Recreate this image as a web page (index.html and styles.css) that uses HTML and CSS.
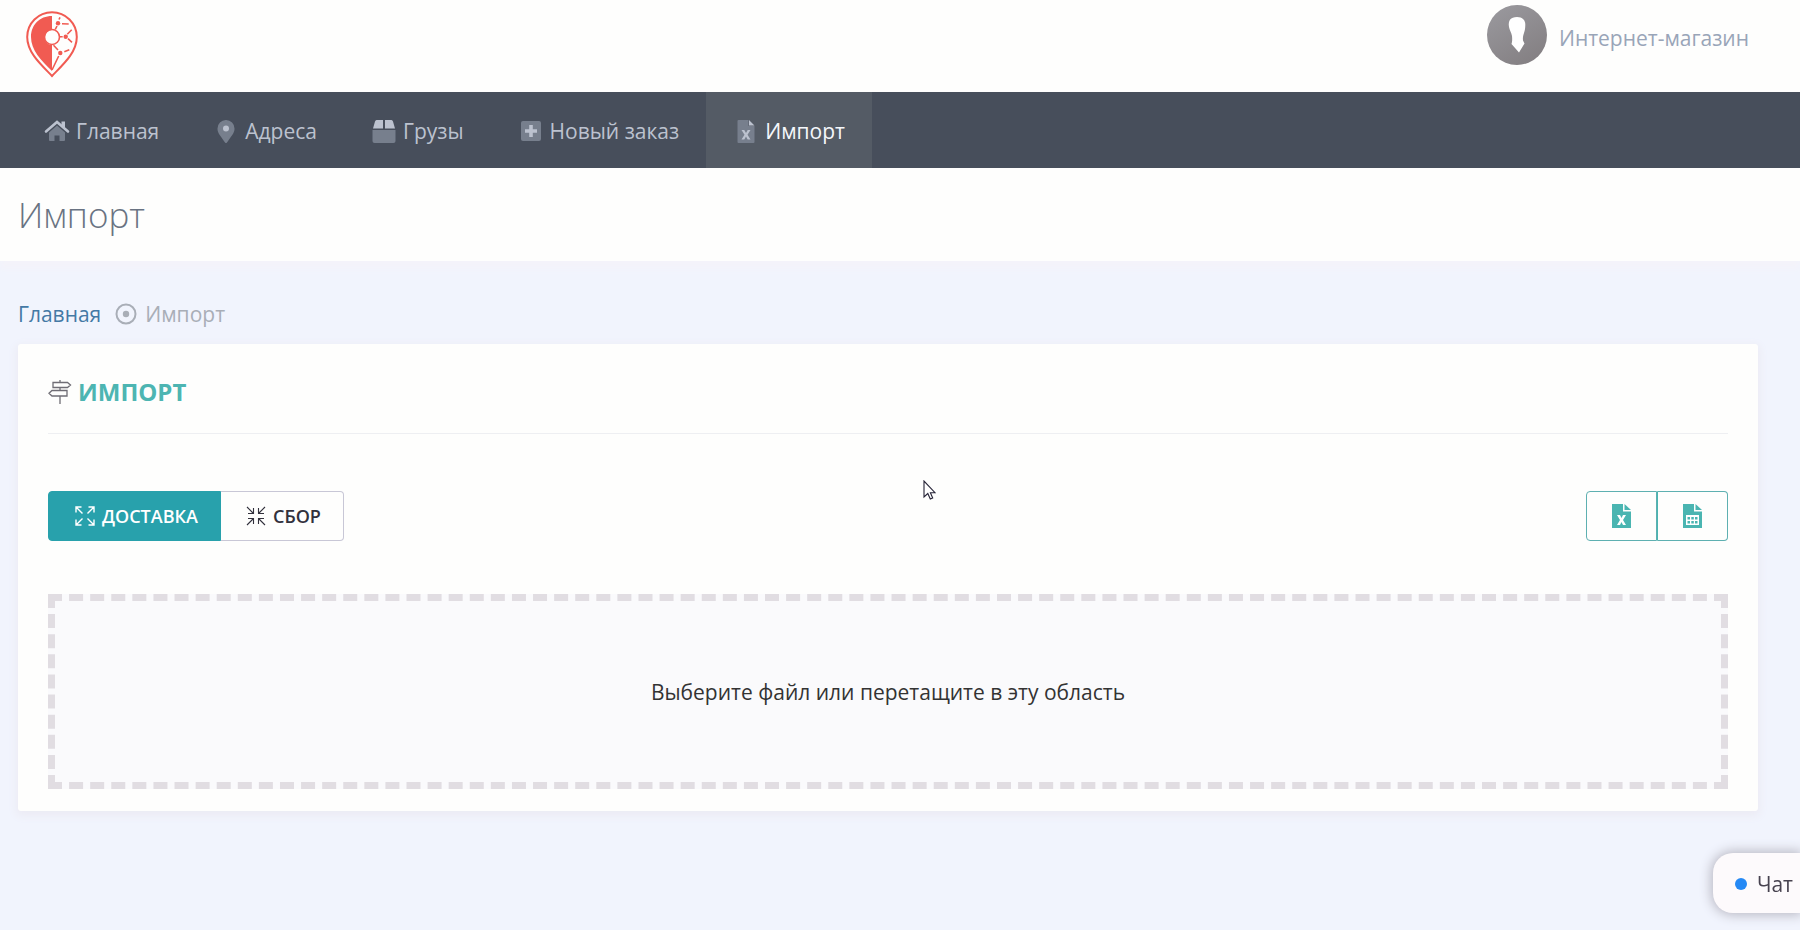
FILE: index.html
```html
<!DOCTYPE html>
<html lang="ru">
<head>
  <meta charset="UTF-8"/>
  <meta name="viewport" content="width=device-width, initial-scale=1.0"/>
  <title>Импорт</title>
  <link rel="stylesheet" href="styles.css">
</head>
<body>
<!-- Top bar: logo and user -->
<header class="top-bar">
  <a class="logo" href="#" aria-label="Главная">
    <svg width="52" height="68" viewBox="0 0 52 68" fill="none" stroke="#f15b52">
      <path d="M26 65C16 54.500 1.200 42 1.200 26a24.800 24.800 0 0 1 49.600 0C50.800 42 36 54.500 26 65z" stroke-width="2"/>
      <path d="M26 5C13.500 5 5 14 5 26c0 13 10 23.500 21 34V34a7.500 7.500 0 0 1 0-15z" fill="#f15b52" stroke="none"/>
      <circle cx="26" cy="26" r="7.500" stroke-width="1.600"/>
      <path d="M29.300 18.300L31 15M36 12.700l6.700.3M33 8.500l1-2.200M34 25.700h2.700M41.300 23.300l4.400-4.600M42 27.700l4 3.600M27.500 34.300L32 39M38.300 40.700l5-2M32.700 45L26 59" stroke-width="1.600"/>
      <g fill="#f15b52" stroke="none">
        <circle cx="32" cy="12.300" r="2.200"/>
        <circle cx="39.700" cy="25.700" r="2.200"/>
        <circle cx="34.300" cy="42" r="2.200"/>
      </g>
    </svg>
  </a>
  <a class="user" href="#">
    <svg class="avatar" viewBox="0 0 60 60">
      <defs>
        <linearGradient id="avatarBg" x1="0" y1="0" x2=".6" y2="1">
          <stop offset="0" stop-color="#9b9a9f"/>
          <stop offset="1" stop-color="#858184"/>
        </linearGradient>
      </defs>
      <circle cx="30" cy="30" r="30" fill="url(#avatarBg)"/>
      <path d="M30 12c5.500 0 8.500 3 8.300 8-.1 3-.3 5.500-1.300 8-1 2.500-1.300 5-1 7.500l1.500 3L32 47.500l-7.500-8.500c.8-2 .8-5 .5-8-.5-3-2.500-6-3-9-1-6.500 1.500-10 8-10z" fill="#fff"/>
    </svg>
    <span>Интернет-магазин</span>
  </a>
</header>

<!-- Main menu -->
<nav class="menu">
  <a class="menu-item" href="#">
    <svg class="menu-icon" width="25" height="22" viewBox="0 0 25 22">
      <path class="dim" d="M12.500 5.500L4.500 12.500V20q0 1 1 1H10v-5.500h5V21h4.500q1 0 1-1v-7.500z"/>
      <path d="M1.500 11.500l11-9.500 11 9.500" fill="none" stroke="currentColor" stroke-width="2.600" stroke-linecap="round"/>
      <path d="M17 1.500h3.500V9L17 6z"/>
    </svg>
    <span>Главная</span>
  </a>
  <a class="menu-item" href="#">
    <svg class="menu-icon" width="17" height="23" viewBox="0 0 17 23">
      <path class="dim" d="M8.500 0A8.400 8.400 0 0 0 0 8.500c0 4 1.200 5 7.500 14q1 1.200 2 0C15.800 13.500 17 12.500 17 8.500A8.400 8.400 0 0 0 8.500 0z"/>
      <circle cx="8.500" cy="8.500" r="3"/>
    </svg>
    <span>Адреса</span>
  </a>
  <a class="menu-item" href="#">
    <svg class="menu-icon" width="23" height="23" viewBox="0 0 23 23">
      <path class="dim" d="M0 10h23v11q0 2-2 2H2q-2 0-2-2z"/>
      <path d="M4 0h6.500v8.500H.5L2.500 1.500Q3 0 4 0zM12.500 0H19q1 0 1.500 1.500l2 7h-10z"/>
    </svg>
    <span>Грузы</span>
  </a>
  <a class="menu-item" href="#">
    <svg class="menu-icon" width="20" height="20" viewBox="0 0 20 20">
      <rect class="dim" width="20" height="20" rx="2"/>
      <path d="M8.200 4h3.600v4.200H16v3.600h-4.200V16H8.200v-4.200H4V8.200h4.200z"/>
    </svg>
    <span>Новый заказ</span>
  </a>
  <a class="menu-item active" href="#" aria-current="page">
    <svg class="menu-icon" width="17" height="23" viewBox="0 0 17 23">
      <path class="dim" d="M1 0h10v6h6v16q0 1-1 1H1q-1 0-1-1V1q0-1 1-1z"/>
      <path class="light" d="M11.500 0L17 5.500h-5.500zM4 10h2.800l1.700 3 1.700-3H13l-3 4.700 3 4.800h-2.800l-1.700-3-1.700 3H4l3-4.800z"/>
    </svg>
    <span>Импорт</span>
  </a>
</nav>

<div class="page-head">
  <h1>Импорт</h1>
</div>

<main class="page">
  <div class="breadcrumb">
    <a href="#">Главная</a>
    <svg width="22" height="22" viewBox="0 0 22 22">
      <circle cx="11" cy="11" r="9.500" fill="none" stroke="currentColor" stroke-width="2"/>
      <circle cx="11" cy="11" r="3.200" fill="currentColor"/>
    </svg>
    <span>Импорт</span>
  </div>

  <section class="card">
    <div class="card-title">
      <svg width="24" height="24" viewBox="0 0 24 24" fill="none" stroke="#6f6d75" stroke-width="1.300">
        <path d="M12 0v2M12 8v3M12 16v8M5 2.500h14.500L22.500 5l-3 2.500H5zM19 10.500H4L1 13.300 4 16h15z"/>
      </svg>
      <h2>Импорт</h2>
    </div>

    <div class="toolbar">
      <div class="btn-group">
        <button class="btn btn-fill" type="button">
          <svg width="20" height="20" viewBox="0 0 20 20" fill="none" stroke="currentColor" stroke-width="1.400">
            <path d="M1 6.500V1h5.500M1 1l6.500 6.500M13.500 1H19v5.500M19 1l-6.500 6.500M1 13.500V19h5.500M1 19l6.500-6.500M13.500 19H19v-5.500M19 19l-6.500-6.500"/>
          </svg>
          <span>Доставка</span>
        </button>
        <button class="btn btn-plain" type="button">
          <svg width="20" height="20" viewBox="0 0 20 20" fill="none" stroke="currentColor" stroke-width="1.100">
            <path d="M2 7.500h5.500V2M7.500 7.500L1 1M12.500 2v5.500H18M12.500 7.500L19 1M2 12.500h5.500V18M7.500 12.500L1 19M18 12.500h-5.500V18M12.500 12.500L19 19"/>
          </svg>
          <span>Сбор</span>
        </button>
      </div>
      <div class="btn-group">
        <button class="btn btn-outline" type="button" aria-label="Excel">
          <svg width="19" height="24" viewBox="0 0 19 24" fill="currentColor">
            <path d="M0 0h11v7.500h8V24H0z"/>
            <path d="M12.500 0L19 6h-6.500z"/>
            <path d="M5 11h3l1.500 3 1.500-3h3l-3 5 3 5h-3l-1.500-3L8 21H5l3-5z" fill="#fff"/>
          </svg>
        </button>
        <button class="btn btn-outline" type="button" aria-label="CSV">
          <svg width="19" height="24" viewBox="0 0 19 24" fill="currentColor">
            <path d="M0 0h11v7.500h8V24H0z"/>
            <path d="M12.500 0L19 6h-6.500z"/>
            <path d="M3 11h13v10H3z" fill="#fff"/>
            <path d="M4.500 13h2.500v2.500H4.500zM8.300 13h2.500v2.500H8.300zM12 13h2.500v2.500H12zM4.500 17h2.500v2.500H4.500zM8.300 17h2.500v2.500H8.300zM12 17h2.500v2.500H12z"/>
          </svg>
        </button>
      </div>
    </div>

    <label class="dropzone">
      <input type="file">
      <span>Выберите файл или перетащите в эту область</span>
    </label>
  </section>
</main>

<button class="chat" type="button"><span class="dot"></span>Чат</button>

<!-- Mouse pointer -->
<svg class="pointer" width="13" height="20" viewBox="0 0 13 20">
  <path d="M1 1v16l3.800-3.500L7.300 19l2.400-1-2.300-5.300H12z" fill="#fff" stroke="#252336" stroke-width="1.100"/>
</svg>
</body>
</html>
```
FILE: styles.css
```css
/* General layout and typography */
* {
    box-sizing: border-box;
}

body {
    margin: 0;
    min-height: 100vh;
    font-family: "Open Sans", "Noto Sans", sans-serif;
    font-size: 21px;
    line-height: 30px;
    color: #333;
    background: #f1f4fd;
}

a {
    text-decoration: none;
}

svg {
    display: block;
    flex: none;
}

button {
    font-family: inherit;
    cursor: pointer;
}

/* Top bar */
.top-bar {
    display: flex;
    justify-content: space-between;
    align-items: flex-start;
    height: 92px;
    padding: 5px 51px 0 26px;
    background: #fefefd;
}

.logo {
    padding-top: 6px;
}

.user {
    display: flex;
    align-items: center;
    gap: 12px;
    color: #99a5b8;
}

.avatar {
    width: 60px;
    height: 60px;
}

.user span {
    padding-top: 6px;
}

/* Main menu */
.menu {
    display: flex;
    height: 76px;
    padding-left: 17px;
    background: #474e5b;
}

.menu-item {
    display: flex;
    align-items: center;
    gap: 5px;
    padding: 2px 27px 0 26px;
    color: #bcc2cf;
}

.menu-item span {
    white-space: nowrap;
}

.menu-icon {
    width: 28px;
    fill: currentColor;
}

.menu-icon .dim {
    fill: #777f8d;
}

.menu-icon .light {
    fill: #bcc2cf;
}

.menu-item.active {
    color: #f4f7fb;
    background: #545b65;
}

/* Page title */
.page-head {
    padding: 24px 18px 23px;
    background: #fefefd;
    box-shadow: 0 8px 6px #f4f3fa;
}

h1 {
    margin: 0;
    font-size: 35px;
    font-weight: 300;
    line-height: 46px;
    color: #697382;
}

.page {
    padding: 38px 42px 0 18px;
}

.breadcrumb {
    display: flex;
    align-items: center;
    gap: 8px;
    margin-bottom: 15px;
    color: #a9aeb7;
}

.breadcrumb a {
    margin-right: 6px;
    color: #4479a5;
}

/* Content card */
.card {
    padding: 30px 30px 22px;
    background: #fefefd;
    border-radius: 3px;
    box-shadow: 0 3px 8px 2px #ecebf4;
}

.card-title {
    display: flex;
    align-items: center;
    gap: 6px;
    padding: 2px 0 25px;
    border-bottom: 1px solid #eeeff2;
}

h2 {
    margin: 0;
    font-size: 24px;
    font-weight: 700;
    line-height: 32px;
    text-transform: uppercase;
    color: #4db5b2;
}

.toolbar {
    display: flex;
    justify-content: space-between;
    margin: 57px 0 53px;
}

/* Buttons */
.btn-group {
    display: flex;
}

.btn {
    display: flex;
    align-items: center;
    justify-content: center;
    gap: 7px;
    height: 50px;
    padding: 0 22px;
    font-size: 18px;
    font-weight: 600;
    text-transform: uppercase;
    border: 1px solid;
    border-radius: 4px;
    background: #fefefd;
}

.btn:first-child {
    border-top-right-radius: 0;
    border-bottom-right-radius: 0;
}

.btn:last-child {
    border-top-left-radius: 0;
    border-bottom-left-radius: 0;
}

.btn-fill {
    padding-left: 26px;
    color: #fff;
    border-color: #28a1ac;
    background: #28a1ac;
}

.btn-plain {
    padding-left: 25px;
    color: #32313c;
    border-color: #c8c7d6;
    border-left: 0;
}

.btn-outline {
    width: 71px;
    color: #4ab5b1;
    border-color: #5eb0b1;
}

.btn-outline + .btn-outline {
    border-left-color: #4ab5b1;
}

/* File drop area */
.dropzone {
    display: flex;
    align-items: center;
    justify-content: center;
    min-height: 195px;
    border: 7px dashed #e1dde2;
    background: #fafafc;
    cursor: pointer;
}

.dropzone input {
    position: absolute;
    opacity: 0;
    width: 1px;
    height: 1px;
}

/* Chat tab */
.chat {
    position: fixed;
    right: 0;
    bottom: 17px;
    display: flex;
    align-items: center;
    gap: 10px;
    height: 60px;
    padding: 2px 7px 0 22px;
    font-size: 21px;
    color: #47424f;
    border: 0;
    border-radius: 20px 0 0 20px;
    background: #fdfafc;
    box-shadow: 0 0 12px 2px #b9b8c3;
}

.dot {
    width: 12px;
    height: 12px;
    border-radius: 50%;
    background: #2589f5;
}

.pointer {
    position: absolute;
    left: 923px;
    top: 480px;
}
```
